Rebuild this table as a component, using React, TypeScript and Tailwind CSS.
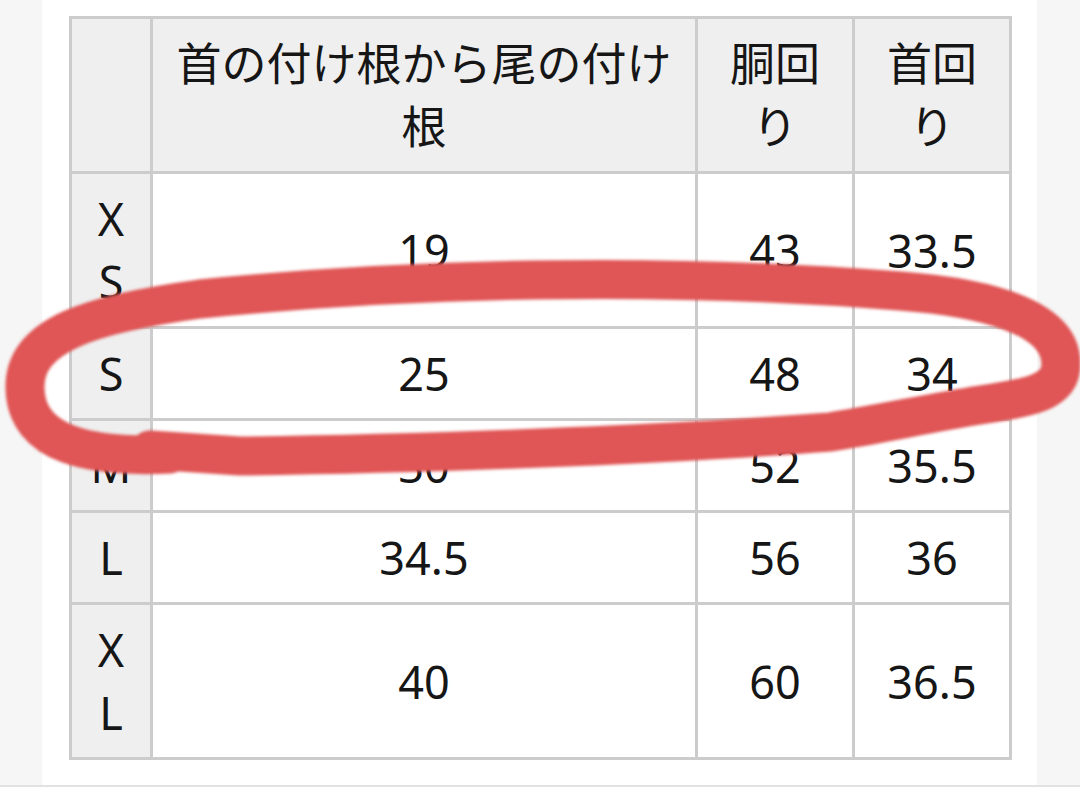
const header = ['', '首の付け根から尾の付け根', '胴回り', '首回り'];

const rows: string[][] = [
  ['XS', '19', '43', '33.5'],
  ['S', '25', '48', '34'],
  ['M', '30', '52', '35.5'],
  ['L', '34.5', '56', '36'],
  ['XL', '40', '60', '36.5'],
];

function Cell({ children, shaded }: { children: string; shaded?: boolean }) {
  return (
    <div
      className={`flex items-center justify-center px-[15px] py-[13px] text-center leading-[63px] break-all ${
        shaded ? 'bg-[#efefef]' : 'bg-white'
      }`}
    >
      {children}
    </div>
  );
}

// hand-drawn red loop around the S row
function Marker() {
  return (
    <svg
      className="pointer-events-none absolute inset-0"
      width="1080"
      height="787"
      viewBox="0 0 1080 787"
    >
      <defs>
        <filter id="soft" x="-5%" y="-20%" width="110%" height="140%">
          <feGaussianBlur stdDeviation="1.4" />
        </filter>
      </defs>
      <path
        d="M 170 454 C 90 458, 26 445, 25 388 C 24 335, 90 314, 200 299 C 400 279, 650 271, 900 291 C 980 297, 1061 315, 1061 364 C 1061 392, 1030 398, 980 405 C 930 413, 880 424, 830 432 C 650 446, 400 454, 240 456 L 150 450"
        fill="none"
        stroke="#e05454"
        strokeWidth="39"
        strokeLinecap="round"
        strokeLinejoin="round"
        filter="url(#soft)"
      />
    </svg>
  );
}

export default function App() {
  return (
    <div className="relative h-[787px] w-[1080px] overflow-hidden bg-[#f6f6f6] font-['Noto_Sans','Noto_Sans_CJK_JP',sans-serif] text-[45px] text-[#161616]">
      <div className="ml-[42px] h-[785px] w-[995px] bg-white pl-[27px] pt-[16px]">
        <div className="grid w-fit grid-cols-[78px_542px_154px_154px] gap-[3px] bg-[#cccccc] p-[3px]">
          {header.map((h, i) => (
            <Cell key={i} shaded>
              {h}
            </Cell>
          ))}
          {rows.map((r) =>
            r.map((v, i) => (
              <Cell key={r[0] + i} shaded={i === 0}>
                {v}
              </Cell>
            ))
          )}
        </div>
      </div>
      <div className="h-[2px] w-full bg-[#e2e2e2]" />
      <Marker />
    </div>
  );
}
